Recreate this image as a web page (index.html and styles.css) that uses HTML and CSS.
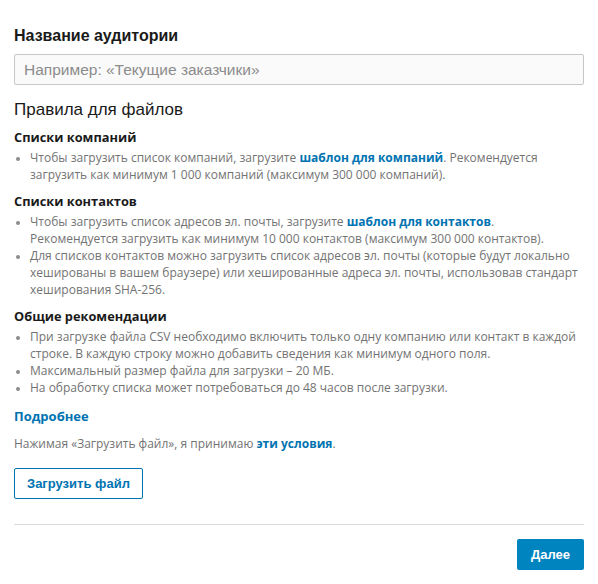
FILE: index.html
```html
<!DOCTYPE html>
<html lang="ru">
<head>
<meta charset="utf-8">
<link rel="stylesheet" href="styles.css">
</head>
<body>
<div class="page">
  <h2 class="title">Название аудитории</h2>
  <input class="name-input" type="text" placeholder="Например: «Текущие заказчики»">
  <h3 class="rules-title">Правила для файлов</h3>

  <h4 class="sub sub-first">Списки компаний</h4>
  <ul class="list">
    <li>Чтобы загрузить список компаний, загрузите <a class="link" href="#">шаблон для компаний</a>. Рекомендуется загрузить как минимум 1&nbsp;000 компаний (максимум 300&nbsp;000 компаний).</li>
  </ul>

  <h4 class="sub">Списки контактов</h4>
  <ul class="list">
    <li>Чтобы загрузить список адресов эл. почты, загрузите <a class="link" href="#">шаблон для контактов</a>. Рекомендуется загрузить как минимум 10&nbsp;000 контактов (максимум 300&nbsp;000 контактов).</li>
    <li>Для списков контактов можно загрузить список адресов эл. почты (которые будут локально хешированы в вашем браузере) или хешированные адреса эл. почты, использовав стандарт хеширования SHA-256.</li>
  </ul>

  <h4 class="sub">Общие рекомендации</h4>
  <ul class="list">
    <li>При загрузке файла CSV необходимо включить только одну компанию или контакт в каждой строке. В каждую строку можно добавить сведения как минимум одного поля.</li>
    <li>Максимальный размер файла для загрузки – 20 МБ.</li>
    <li>На обработку списка может потребоваться до 48 часов после загрузки.</li>
  </ul>

  <a class="more link" href="#">Подробнее</a>
  <p class="terms">Нажимая «Загрузить файл», я принимаю <a class="link" href="#">эти условия</a>.</p>

  <button class="upload" type="button">Загрузить файл</button>

  <div class="footer">
    <button class="next" type="button">Далее</button>
  </div>
</div>
</body>
</html>
```
FILE: styles.css
```css
* { box-sizing: border-box; }
html, body { margin: 0; padding: 0; background: #fff; }
body {
  font-family: "Open Sans", "Liberation Sans", Arial, sans-serif;
  color: #737373;
}
.page {
  width: 598px;
  padding: 27px 14px 0 14px;
  display: flex;
  flex-direction: column;
  align-items: flex-start;
}
.title {
  margin: 0;
  font-family: "Liberation Sans", Arial, sans-serif;
  font-size: 16px;
  font-weight: bold;
  color: #1a1a1a;
  line-height: 18px;
}
.name-input {
  margin-top: 9px;
  width: 570px;
  height: 31px;
  border: 1px solid #c7c7c7;
  border-radius: 2px;
  background: #fafafa;
  padding: 0 9px;
  font-family: "Liberation Sans", Arial, sans-serif;
  font-size: 15.5px;
  color: #333;
}
.name-input::placeholder { color: #8c8c8c; }
.rules-title {
  margin: 15px 0 0 0;
  font-family: "Liberation Sans", Arial, sans-serif;
  font-size: 17px;
  font-weight: normal;
  color: #1a1a1a;
  line-height: 20px;
}
.sub {
  margin: 10px 0 0 0;
  font-size: 12.8px;
  font-weight: bold;
  color: #1a1a1a;
  line-height: 16px;
}
.sub-first { margin-top: 9px; }
.list {
  margin: 4px 0 0 0;
  padding: 0 0 0 16px;
  font-size: 12px;
  line-height: 17px;
  color: #737373;
}
.list li::marker { color: #8c8c8c; font-size: 10px; }
.link {
  color: #0073b1;
  font-weight: bold;
  text-decoration: none;
}
.more {
  margin-top: 12px;
  font-size: 13px;
  line-height: 16px;
}
.terms {
  margin: 12px 0 0 0;
  font-size: 12px;
  line-height: 16px;
  color: #737373;
}
.upload {
  margin-top: 16px;
  height: 31px;
  padding: 0 12px;
  border: 1px solid #0073b1;
  border-radius: 2px;
  background: #fff;
  color: #0073b1;
  font-family: "Liberation Sans", Arial, sans-serif;
  font-size: 13px;
  font-weight: bold;
}
.footer {
  margin-top: 25px;
  width: 570px;
  border-top: 1px solid #d9d9d9;
  padding-top: 14px;
  display: flex;
  justify-content: flex-end;
}
.next {
  height: 31px;
  padding: 0 14px;
  border: none;
  border-radius: 2px;
  background: #0084bf;
  color: #fff;
  font-family: "Liberation Sans", Arial, sans-serif;
  font-size: 13px;
  font-weight: bold;
}
```
